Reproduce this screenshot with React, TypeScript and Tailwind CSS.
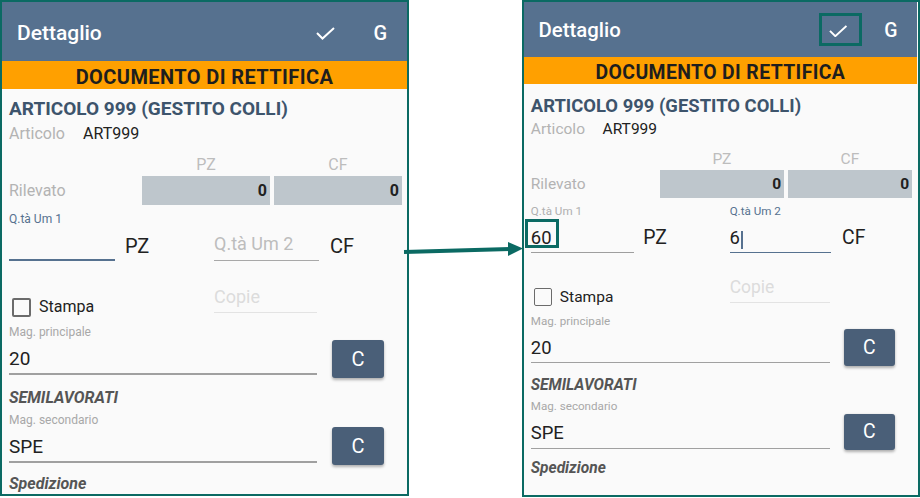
import React from "react";

function CheckIcon() {
  return (
    <svg width="19" height="13" viewBox="0 0 19 13" className="block">
      <polyline points="1,6 6.5,11.5 18,1" fill="none" stroke="white" strokeWidth="2" />
    </svg>
  );
}

function Phone({ after }: { after: boolean }) {
  return (
    <div
      className={
        after
          ? "w-[398px] h-[497px] ml-[113px] border-2 border-[#0b6a63] bg-[#fafafa] overflow-hidden shrink-0"
          : "w-[409px] h-[496px] border-2 border-[#0b6a63] bg-[#fafafa] overflow-hidden shrink-0"
      }
    >
      <div className={after ? "w-[405px] [zoom:0.97]" : "w-[405px]"}>
        {/* toolbar */}
        <div
          className={
            after
              ? "h-[57px] bg-[#56718f] flex items-center pt-[3px] text-white"
              : "h-[59px] bg-[#56718f] flex items-center pt-[3px] text-white"
          }
        >
          <div className="flex-1 pl-[15px] text-[21px] font-medium leading-[24px]">Dettaglio</div>
          <CheckIcon />
          <div className="ml-[38px] mr-[20px] text-[20px] font-medium leading-[24px]">G</div>
        </div>
        {/* orange banner */}
        <div className="h-[28px] bg-[#ffa000] flex items-center justify-center pt-[3px] text-[20px] tracking-[0.4px] font-bold text-[#1e1e1e] leading-[22px] whitespace-nowrap">
          DOCUMENTO DI RETTIFICA
        </div>
        {/* body */}
        <div
          className={
            after
              ? "flex flex-col pl-[7px] pr-[5px] pt-[1.5px] text-[#212121]"
              : "flex flex-col pl-[7px] pr-[5px] text-[#212121]"
          }
        >
          <div className="mt-[8px] h-[24px] leading-[24px] text-[19px] font-bold text-[#3d546c] whitespace-nowrap">
            ARTICOLO 999 (GESTITO COLLI)
          </div>
          <div className="mt-[3px] h-[20px] leading-[20px] text-[16px] flex">
            <span className="w-[74px] text-[#b3b3b3]">Articolo</span>
            <span>ART999</span>
          </div>
          <div className="mt-[11px] h-[20px] leading-[20px] text-[16px] flex text-[#bdbdbd]">
            <div className="w-[133px]" />
            <div className="w-[128px] text-center">PZ</div>
            <div className="w-[128px] ml-[4px] text-center">CF</div>
          </div>
          <div className="mt-[1px] h-[29px] flex items-center">
            <div className="w-[133px] text-[16px] leading-[20px] text-[#b3b3b3]">Rilevato</div>
            <div className="w-[128px] h-[29px] bg-[#bec6cc] flex items-center justify-end pr-[3px] text-[16px] font-bold">
              0
            </div>
            <div className="w-[128px] h-[29px] ml-[4px] bg-[#bec6cc] flex items-center justify-end pr-[3px] text-[16px] font-bold">
              0
            </div>
          </div>
          {/* Q.tà labels */}
          <div className="mt-[7px] h-[14px] leading-[14px] text-[12px] flex">
            <div className={after ? "w-[205px] text-[#b0b0b0]" : "w-[205px] text-[#56718f]"}>Q.tà Um 1</div>
            <div className="text-[#56718f]">{after ? "Q.tà Um 2" : ""}</div>
          </div>
          {/* quantity inputs */}
          <div className="flex items-start">
            <div
              className={
                after
                  ? "w-[106px] h-[35px] pt-[8px] border-b border-[#9e9e9e] text-[19px] leading-[24px]"
                  : "w-[106px] h-[35px] pt-[8px] border-b-2 border-[#56718f] text-[19px] leading-[24px]"
              }
            >
              {after ? "60" : ""}
            </div>
            <div className="ml-[10px] w-[89px] h-[35px] pt-[8px] text-[20px] leading-[24px]">PZ</div>
            <div
              className={
                after
                  ? "w-[105px] h-[35px] pt-[8px] border-b-2 border-[#56718f] text-[19px] leading-[24px]"
                  : "w-[105px] h-[35px] pt-[6px] border-b border-[#a8a8a8] text-[18px] leading-[24px] text-[#bdbdbd]"
              }
            >
              {after ? (
                <div className="flex items-center h-[24px]">
                  <span>6</span>
                  <span className="ml-[1px] mt-[4px] w-[2px] h-[19px] bg-[#56718f]" />
                </div>
              ) : (
                "Q.tà Um 2"
              )}
            </div>
            <div className="ml-[11px] h-[35px] pt-[8px] text-[20px] leading-[24px]">CF</div>
          </div>
          {/* Stampa / Copie */}
          <div className="mt-[16px] h-[36px] flex items-start">
            <div className="w-[205px] pt-[20px]">
              <div className="flex items-center h-[20px]">
                <div className="ml-[3px] w-[19px] h-[19px] border-2 border-[#6b6b6b] rounded-[2px]" />
                <span className="ml-[8px] text-[16px] leading-[20px]">Stampa</span>
              </div>
            </div>
            <div className="w-[103px] h-[36px] pt-[8px] border-b border-[#e3e3e3] text-[18px] leading-[24px] text-[#dcdcdc]">
              Copie
            </div>
          </div>
          {/* Mag. principale */}
          <div className="mt-[12px] h-[14px] leading-[14px] text-[12px] text-[#a8a8a8]">Mag. principale</div>
          <div className="flex items-start">
            <div className="w-[308px] h-[36px] pt-[8px] border-b-2 border-[#a0a0a0] text-[19px] leading-[24px]">20</div>
            <div className="ml-[15px] mt-[1px] w-[52px] h-[38px] bg-[#4a5f78] rounded-[3px] shadow-[0_2px_3px_rgba(0,0,0,0.3)] flex items-center justify-center text-white text-[20px]">
              C
            </div>
          </div>
          <div className="mt-[10px] h-[20px] leading-[20px] text-[16px] font-bold italic text-[#555555]">SEMILAVORATI</div>
          {/* Mag. secondario */}
          <div className="mt-[5px] h-[14px] leading-[14px] text-[12px] text-[#a8a8a8]">Mag. secondario</div>
          <div className="flex items-start">
            <div className="w-[308px] h-[36px] pt-[8px] border-b-2 border-[#a0a0a0] text-[19px] leading-[24px]">SPE</div>
            <div className="ml-[15px] w-[52px] h-[38px] bg-[#4a5f78] rounded-[3px] shadow-[0_2px_3px_rgba(0,0,0,0.3)] flex items-center justify-center text-white text-[20px]">
              C
            </div>
          </div>
          <div className="mt-[9px] h-[20px] leading-[20px] text-[16px] font-bold italic text-[#555555]">Spedizione</div>
        </div>
      </div>
    </div>
  );
}

export default function App() {
  return (
    <div className="relative w-[920px] h-[498px] bg-white flex items-start font-['Roboto',sans-serif]">
      <Phone after={false} />
      <Phone after={true} />
      {/* annotations */}
      <div className="absolute left-[819px] top-[13px] w-[43px] h-[33px] border-[3px] border-[#0b6a63]" />
      <div className="absolute left-[525px] top-[219px] w-[34px] h-[29px] border-[3px] border-[#0b6a63]" />
      <svg className="absolute left-[400px] top-[238px]" width="126" height="22" viewBox="0 0 126 22">
        <line x1="4" y1="14" x2="112" y2="11" stroke="#0b6a63" strokeWidth="4" />
        <polygon points="108,4 123,10.5 108,18" fill="#0b6a63" />
      </svg>
    </div>
  );
}
